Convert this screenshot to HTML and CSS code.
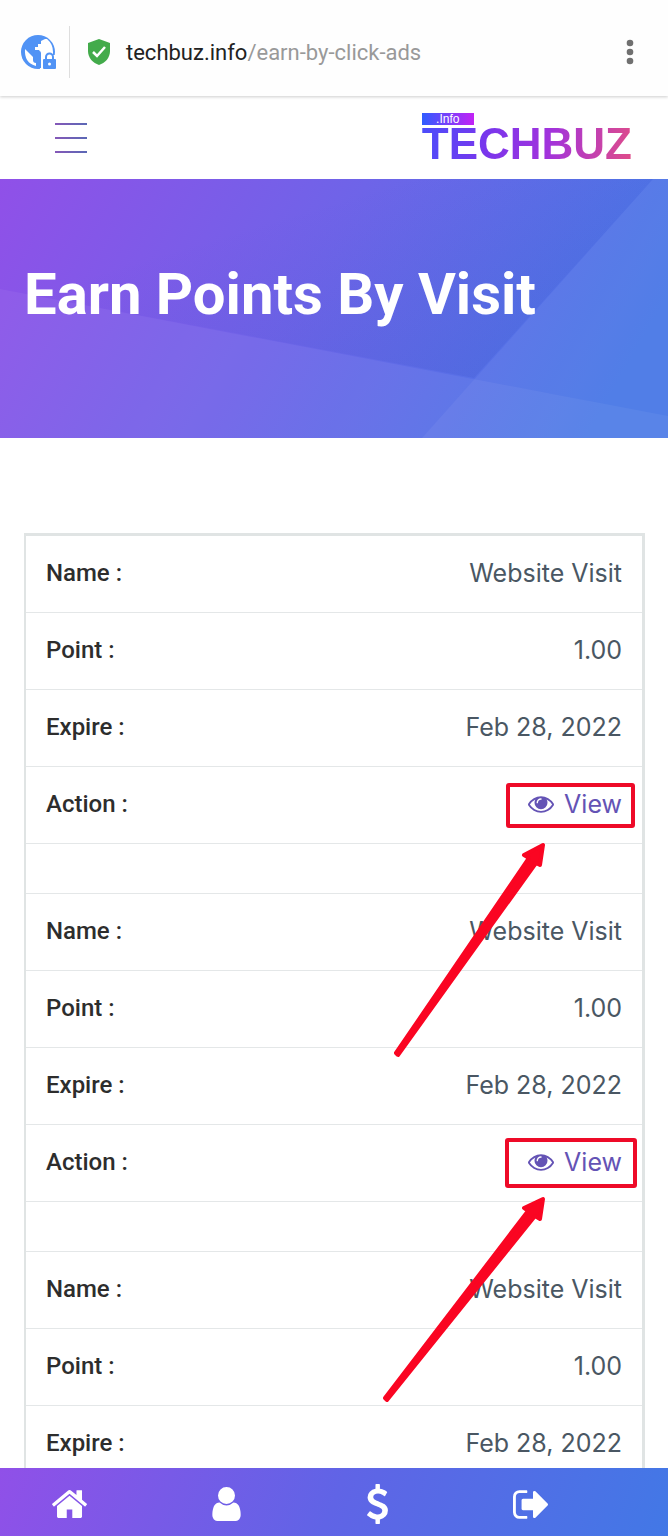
FILE: index.html
```html
<!DOCTYPE html>
<html lang="en">
<head>
    <meta charset="utf-8"/>
    <meta name="viewport" content="width=device-width, initial-scale=1">
    <title>Earn Points By Visit</title>
    <link rel="stylesheet" href="styles.css">
</head>
<body>
    <header class="url-bar">
        <svg class="globe" viewBox="0 0 36 36" aria-hidden="true">
            <circle cx="17" cy="18" r="17" fill="#5193f5"/>
            <path fill="#fff" d="M26 5 Q32 10 32 18 V21 H36 V36 H19 V26 L19 22 H24 V16 H14 V13 H17 V10 H20 V7 L24 5 Z"/>
            <path fill="#fff" d="M4 15 L12 23 V26 Q12 29 15 29 V32 Q3 29 4 15 Z"/>
            <path fill="#fff" d="M18 15 H24 V23 H20 Z"/>
            <path fill="#5193f5" d="M13 17 H18 Q20 17 20 19 V34 H15 V28 L12 24 Z"/>
            <rect x="22" y="25" width="13" height="10" rx="1" fill="#5193f5"/>
            <path fill="none" stroke="#5193f5" stroke-width="2" d="M25 26 V23 a3 3 0 0 1 7 0 V26"/>
            <circle cx="28.500" cy="30" r="1.500" fill="#fff"/>
        </svg>
        <span class="divider"></span>
        <svg class="shield" viewBox="0 0 22 26" aria-hidden="true">
            <path fill="#43ab4b" d="M11 0 L22 4 V12 C22 19 17 24 11 26 C5 24 0 19 0 12 V4 Z"/>
            <path fill="none" stroke="#fff" stroke-width="2.500" d="M5 13 L9 17 L17 8"/>
        </svg>
        <p class="url">techbuz.info<span class="url-path">/earn-by-click-ads</span></p>
        <button class="more" type="button" aria-label="More options">
            <svg viewBox="0 0 8 26"><circle cx="4" cy="4" r="3.300"/><circle cx="4" cy="13" r="3.300"/><circle cx="4" cy="22" r="3.300"/></svg>
        </button>
    </header>

    <div class="site-header">
        <button class="menu" type="button" aria-label="Menu">
            <span class="menu-line"></span>
            <span class="menu-line"></span>
            <span class="menu-line"></span>
        </button>
        <a class="logo" href="#">
            <span class="logo-tag">.Info</span>
            <span class="logo-name">TECHBUZ</span>
        </a>
    </div>

    <main class="content">
        <section class="hero">
            <svg class="hero-shapes" viewBox="0 0 668 259" preserveAspectRatio="none" aria-hidden="true">
                <defs>
                    <linearGradient id="shade" x1="0" y1="0" x2="1" y2="1">
                        <stop offset="0.3" stop-color="#2a35a8" stop-opacity="0"/>
                        <stop offset="1" stop-color="#2a45b8" stop-opacity="0.15"/>
                    </linearGradient>
                </defs>
                <path fill="url(#shade)" d="M0 0 H653 L474 199 L0 110 Z"/>
                <path fill="#fff" fill-opacity="0.05" d="M0 110 L668 237 V259 H0 Z"/>
                <path fill="#fff" fill-opacity="0.05" d="M653 0 H668 V259 H422 Z"/>
            </svg>
            <h1 class="hero-title">Earn Points By Visit</h1>
        </section>

        <section class="ads">
            <table class="ads-table">
                <tbody>
                    <tr><th scope="row">Name :</th><td>Website Visit</td></tr>
                    <tr><th scope="row">Point :</th><td>1.00</td></tr>
                    <tr><th scope="row">Expire :</th><td>Feb 28, 2022</td></tr>
                    <tr>
                        <th scope="row">Action :</th>
                        <td><a class="view" href="#"><svg class="eye" viewBox="0 384 1792 1152" aria-hidden="true"><use href="#icon-eye"/></svg>View</a></td>
                    </tr>
                    <tr class="spacer"><td colspan="2"></td></tr>
                </tbody>
                <tbody>
                    <tr><th scope="row">Name :</th><td>Website Visit</td></tr>
                    <tr><th scope="row">Point :</th><td>1.00</td></tr>
                    <tr><th scope="row">Expire :</th><td>Feb 28, 2022</td></tr>
                    <tr>
                        <th scope="row">Action :</th>
                        <td><a class="view" href="#"><svg class="eye" viewBox="0 384 1792 1152" aria-hidden="true"><use href="#icon-eye"/></svg>View</a></td>
                    </tr>
                    <tr class="spacer"><td colspan="2"></td></tr>
                </tbody>
                <tbody>
                    <tr><th scope="row">Name :</th><td>Website Visit</td></tr>
                    <tr><th scope="row">Point :</th><td>1.00</td></tr>
                    <tr><th scope="row">Expire :</th><td>Feb 28, 2022</td></tr>
                </tbody>
            </table>

            <!-- highlights round the two view links -->
            <svg class="marks" viewBox="380 533 264 880" aria-hidden="true">
                <rect x="508" y="785" width="125" height="41" rx="1"/>
                <rect x="507" y="1140" width="128" height="46" rx="1"/>
                <path d="M396 1053 L529 858 L524 855 L543 845 L540 865 L536 863 L398 1055 Z"/>
                <path d="M385 1398 L528 1211 L524 1208 L543 1199 L540 1219 L535 1216 L387 1400 Z"/>
            </svg>
        </section>
    </main>

    <nav class="bottom-nav">
        <a href="#" aria-label="Home">
            <svg class="icon-home" viewBox="89 250 1612 1290"><path d="M1472 992v480q0 26-19 45t-45 19h-384v-384h-256v384h-384q-26 0-45-19t-19-45v-480q0-1 .5-3t.5-3l575-474 575 474q1 2 1 6zm223-69l-62 74q-8 9-21 11h-3q-13 0-21-7l-692-577-692 577q-12 8-24 7-13-2-21-11l-62-74q-8-10-7-23.5t11-21.5l719-599q32-26 76-26t76 26l244 204v-195q0-14 9-23t23-9h192q14 0 23 9t9 23v408l219 182q10 8 11 21.5t-7 23.5z"/></svg>
        </a>
        <a href="#" aria-label="Profile">
            <svg class="icon-user" viewBox="256 128 1280 1536"><path d="M1536 1399q0 109-62.5 187t-150.5 78h-854q-88 0-150.5-78t-62.5-187q0-85 8.5-160.5t31.5-152 58.5-131 94-89 134.500-34.500q131 128 313 128t313-128q76 0 134.500 34.500t94 89 58.500 131 31.500 152 8.500 160.500zm-256-887q0 159-112.500 271.500t-271.500 112.500-271.500-112.500-112.500-271.500 112.500-271.500 271.500-112.500 271.500 112.500 112.500 271.500z"/></svg>
        </a>
        <a href="#" aria-label="Points">
            <svg class="icon-usd" viewBox="426 0 940 1792"><path d="M1362 1185q0 153-99.5 263.5t-258.5 136.5v175q0 14-9 23t-23 9h-135q-13 0-22.5-9.5t-9.5-22.5v-175q-66-9-127.5-31t-101.5-44.5-74-48-46.5-37.5-17.5-18q-17-21-2-41l103-135q7-10 23-12 15-2 24 9l2 2q113 99 243 125 37 8 74 8 81 0 142.5-43t61.5-122q0-28-15-53t-33.5-42-58.5-37.5-66-32-80-32.5q-39-16-61.5-25t-61.5-26.5-62.5-31-56.5-35.5-53.5-42.5-43.5-49-35.5-58-21-66.5-8.5-78q0-138 98-242t255-134v-180q0-13 9.5-22.5t22.5-9.5h135q14 0 23 9t9 23v176q57 6 110.5 23t87 33.5 63.5 37.5 39 29 15 14q17 18 5 38l-81 146q-8 15-23 16-14 3-27-7-3-3-14.5-12t-39-26.5-58.5-32-74.5-26-85.5-11.5q-95 0-155 43t-60 111q0 26 8.5 48t29.5 41.5 39.5 33 56 31 60.5 27 70 27.5q53 20 81 31.5t76 35 75.5 42.5 62 50 53 63.5 31.5 76.5 13 94z"/></svg>
        </a>
        <a href="#" aria-label="Sign out">
            <svg class="icon-out" viewBox="64 256 1568 1280"><path d="M704 1440q0 4 1 20t.5 26.5-3 23.5-10 19.5-20.5 6.5h-320q-119 0-203.5-84.5t-84.5-203.5v-704q0-119 84.5-203.5t203.5-84.5h320q13 0 22.5 9.5t9.5 22.5q0 4 1 20t.5 26.5-3 23.5-10 19.5-20.5 6.5h-320q-66 0-113 47t-47 113v704q0 66 47 113t113 47h312l11.5 1 11.5 3 8 5.5 7 9 2 13.5zm928-544q0 26-19 45l-544 544q-19 19-45 19t-45-19-19-45v-288h-448q-26 0-45-19t-19-45v-384q0-26 19-45t45-19h448v-288q0-26 19-45t45-19 45 19l544 544q19 19 19 45z"/></svg>
        </a>
    </nav>

    <svg class="symbols" aria-hidden="true">
        <defs>
            <path id="icon-eye" d="M1664 960q-152-236-381-353 61 104 61 225 0 185-131.5 316.5t-316.5 131.5-316.5-131.5-131.5-316.5q0-121 61-225-229 117-381 353 133 205 333.5 326.5t434.5 121.5 434.5-121.5 333.5-326.5zm-720-384q0-20-14-34t-34-14q-125 0-214.5 89.5t-89.5 214.5q0 20 14 34t34 14 34-14 14-34q0-86 61-147t147-61q20 0 34-14t14-34zm848 384q0 34-20 69-140 230-376.5 368.5t-499.5 138.5-499.5-139-376.5-368q-20-35-20-69t20-69q140-229 376.5-368t499.5-139 499.5 139 376.5 368q20 35 20 69z"/>
        </defs>
    </svg>
</body>
</html>
```
FILE: styles.css
```css
* {
    box-sizing: border-box;
}
body {
    display: flex;
    flex-direction: column;
    height: 100vh;
    margin: 0;
    overflow: hidden;
    font-family: Inter, "Open Sans", sans-serif;
    background-color: #fff;
}
button {
    padding: 0;
    border: none;
    background: none;
    cursor: pointer;
}
svg {
    display: block;
}
a {
    text-decoration: none;
}
.url-bar {
    display: flex;
    align-items: center;
    flex: none;
    height: 96px;
    padding: 8px 34px 0 21px;
    background-color: #fefefe;
    box-shadow: 0 1px 3px rgba(0,0,0,0.2);
    position: relative;
}
.globe {
    width: 36px;
    height: 36px;
}
.divider {
    width: 1px;
    height: 52px;
    margin: 0 18px 0 12px;
    background-color: #dedede;
}
.shield {
    width: 22px;
    height: 26px;
}
.url {
    flex: 1;
    margin: 0 0 0 16px;
    font-family: Roboto, sans-serif;
    font-size: 22px;
    color: #222;
}
.url-path {
    color: #999;
}
.more svg {
    width: 8px;
    height: 26px;
    fill: #707070;
}
.site-header {
    display: flex;
    justify-content: space-between;
    align-items: center;
    flex: none;
    height: 83px;
    padding: 0 36px 0 55px;
}
.menu {
    display: flex;
    flex-direction: column;
    gap: 12px;
    width: 32px;
}
.menu-line {
    width: 100%;
    height: 2px;
    background: linear-gradient(90deg, #8558b8, #5b68b5);
}
.logo {
    display: flex;
    flex-direction: column;
    align-items: flex-start;
}
.logo-tag {
    width: 52px;
    font: 12px/12px "Liberation Sans", Arial, sans-serif;
    text-align: center;
    color: #fff;
    background: linear-gradient(90deg, #2f5cff, #c322f5);
}
.logo-name {
    font: bold 44px/38px "Liberation Sans", Arial, sans-serif;
    color: transparent;
    background: linear-gradient(100deg, #4b4dfb, #7a36ec 32%, #a233dc 60%, #e04c88);
    background-clip: text;
    -webkit-background-clip: text;
}
.content {
    flex: 1;
    min-height: 0;
    overflow: hidden;
}
.hero {
    position: relative;
    padding: 82px 24px 111px;
    background: linear-gradient(120deg, #9050e8, #6e64e8 45%, #4878e6 90%);
}
.hero-shapes {
    position: absolute;
    inset: 0;
    width: 100%;
    height: 100%;
}
.hero-title {
    position: relative;
    margin: 0;
    font-family: Roboto, sans-serif;
    font-size: 58px;
    font-weight: bold;
    line-height: 66px;
    color: #fff;
}
.ads {
    position: relative;
    margin: 95px 23px 0 24px;
}
.ads-table {
    width: 100%;
    border: 3px solid #e0e4e4;
    border-left-width: 2px;
    border-bottom: none;
    border-spacing: 0;
}
.ads-table th, .ads-table td {
    height: 77px;
    padding: 0 20px 2px;
    border-bottom: 1px solid #e4e7e8;
}
.ads-table th {
    font-family: Roboto, sans-serif;
    font-size: 24px;
    font-weight: 500;
    text-align: left;
    color: #2d2d2d;
}
.ads-table td {
    font-size: 25px;
    text-align: right;
    color: #4a5763;
}
.ads-table .spacer td {
    height: 50px;
}
.view {
    display: inline-flex;
    align-items: center;
    gap: 10px;
    color: #6453b5;
}
.eye {
    width: 26px;
    height: 17px;
    fill: #6453b5;
}
.marks {
    position: absolute;
    top: 0;
    right: 1px;
    width: 264px;
    height: 880px;
    pointer-events: none;
}
.marks rect {
    fill: none;
    stroke: #ee0a28;
    stroke-width: 4px;
}
.marks path {
    fill: #fa0522;
    stroke: #fa0522;
    stroke-width: 4px;
    stroke-linejoin: round;
}
.bottom-nav {
    display: flex;
    justify-content: space-between;
    align-items: center;
    flex: none;
    height: 68px;
    padding: 4px 120px 0 52px;
    background: linear-gradient(110deg, #9050e8, #6064e6 50%, #4278e6);
}
.bottom-nav svg {
    fill: #fff;
}
.icon-home {
    width: 35px;
    height: 28px;
}
.icon-user {
    width: 29px;
    height: 34px;
}
.icon-usd {
    width: 21px;
    height: 40px;
}
.icon-out {
    width: 35px;
    height: 29px;
}
.symbols {
    position: absolute;
    width: 0;
    height: 0;
}
```
